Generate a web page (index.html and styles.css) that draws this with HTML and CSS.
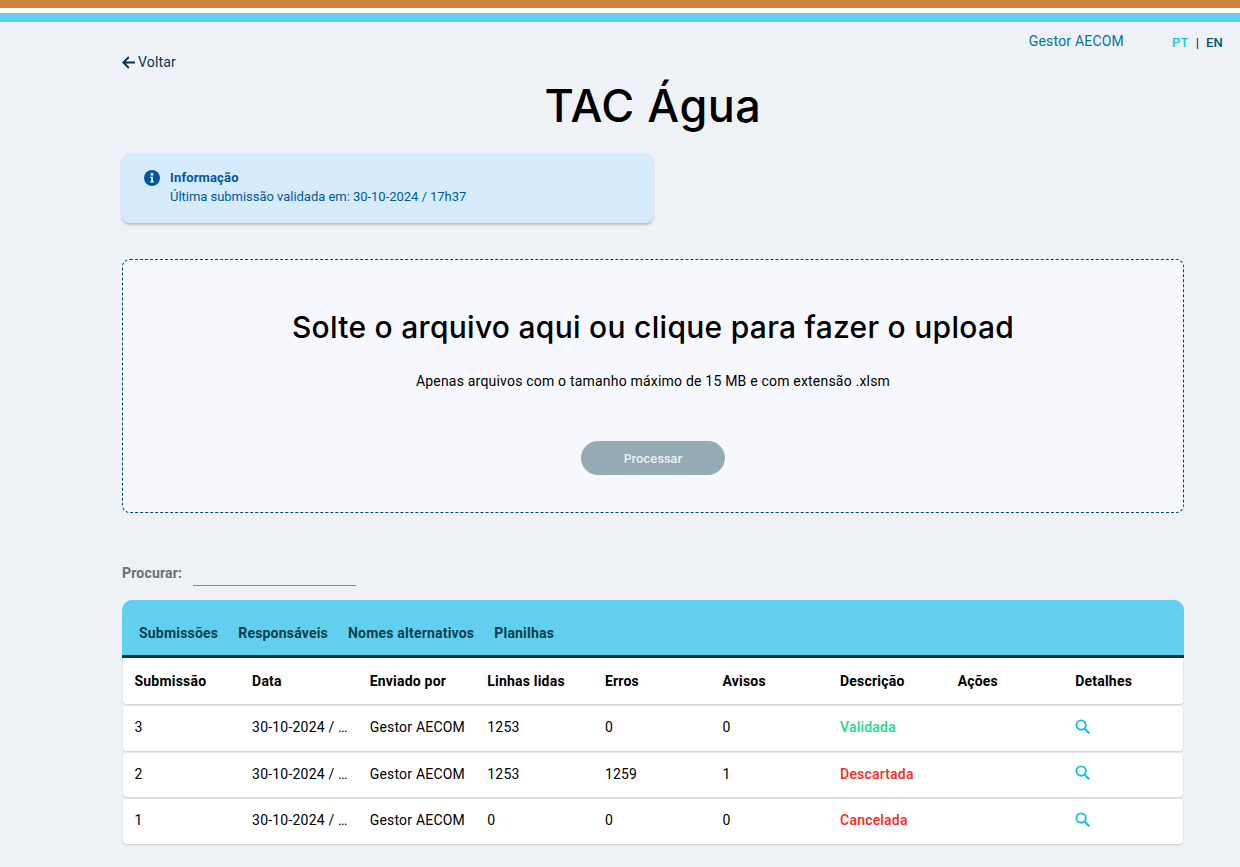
FILE: index.html
```html
<!DOCTYPE html>
<html lang="pt">
<head>
<meta charset="utf-8">
<title>TAC Água</title>
<link rel="stylesheet" href="styles.css">
</head>
<body>
<div class="bar-orange"></div>
<div class="bar-blue"></div>
<main class="page">
  <div class="userbar">
    <span class="user">Gestor AECOM</span>
    <span class="langs"><span class="lang-on">PT</span><span class="lang-sep">|</span><span class="lang-off">EN</span></span>
  </div>
  <a class="back" href="#">
    <svg class="back-icon" viewBox="2 2 20 20" width="13" height="13" aria-hidden="true"><path d="M22 12H5M12.500 3.500 4 12l8.500 8.500" fill="none" stroke="currentColor" stroke-width="2.900"/></svg>
    Voltar
  </a>
  <h1 class="title">TAC Água</h1>
  <section class="notice">
    <svg class="notice-icon" viewBox="0 0 16 16" width="16" height="16" aria-hidden="true"><circle cx="8" cy="8" r="8" fill="#01579b"/><circle cx="8" cy="4.400" r="1.400" fill="#fff"/><path d="M6.200 6.800H9v4.600h1v1.200H6.200v-1.200h1V8h-1z" fill="#fff"/></svg>
    <div>
      <div class="notice-title">Informação</div>
      <div class="notice-text">Última submissão validada em: 30-10-2024 / 17h37</div>
    </div>
  </section>
  <section class="drop">
    <h2 class="drop-title">Solte o arquivo aqui ou clique para fazer o upload</h2>
    <p class="drop-text">Apenas arquivos com o tamanho máximo de 15 MB e com extensão .xlsm</p>
    <button class="process" type="button">Processar</button>
  </section>
  <div class="search">
    <label class="search-label" for="q">Procurar:</label>
    <input class="search-input" id="q" type="text">
  </div>
  <section class="panel">
    <nav class="tabs">
      <span class="tab">Submissões</span>
      <span class="tab">Responsáveis</span>
      <span class="tab">Nomes alternativos</span>
      <span class="tab">Planilhas</span>
    </nav>
    <div class="rows">
      <div class="row head">
        <span>Submissão</span><span>Data</span><span>Enviado por</span><span>Linhas lidas</span><span>Erros</span><span>Avisos</span><span>Descrição</span><span>Ações</span><span>Detalhes</span>
      </div>
      <div class="row">
        <span>3</span><span class="clip">30-10-2024 / 17h37</span><span>Gestor AECOM</span><span>1253</span><span>0</span><span>0</span><span class="ok">Validada</span><span></span>
        <span><svg class="lens" viewBox="0 0 16 16" width="15" height="15" aria-hidden="true"><circle cx="6.500" cy="6.500" r="5" fill="none" stroke="currentColor" stroke-width="2"/><path d="m10.300 10.300 4.400 4.400" stroke="currentColor" stroke-width="2.200" stroke-linecap="round"/></svg></span>
      </div>
      <div class="row">
        <span>2</span><span class="clip">30-10-2024 / 16h12</span><span>Gestor AECOM</span><span>1253</span><span>1259</span><span>1</span><span class="bad">Descartada</span><span></span>
        <span><svg class="lens" viewBox="0 0 16 16" width="15" height="15" aria-hidden="true"><circle cx="6.500" cy="6.500" r="5" fill="none" stroke="currentColor" stroke-width="2"/><path d="m10.300 10.300 4.400 4.400" stroke="currentColor" stroke-width="2.200" stroke-linecap="round"/></svg></span>
      </div>
      <div class="row">
        <span>1</span><span class="clip">30-10-2024 / 15h48</span><span>Gestor AECOM</span><span>0</span><span>0</span><span>0</span><span class="bad">Cancelada</span><span></span>
        <span><svg class="lens" viewBox="0 0 16 16" width="15" height="15" aria-hidden="true"><circle cx="6.500" cy="6.500" r="5" fill="none" stroke="currentColor" stroke-width="2"/><path d="m10.300 10.300 4.400 4.400" stroke="currentColor" stroke-width="2.200" stroke-linecap="round"/></svg></span>
      </div>
    </div>
  </section>
</main>
</body>
</html>
```
FILE: styles.css
```css
* { box-sizing: border-box; }
html, body { margin: 0; height: 100%; }
body {
  background: #eef1f6;
  font-family: Roboto, "Liberation Sans", sans-serif;
  font-size: 14px;
  letter-spacing: .2px;
  color: #000;
  overflow: hidden;
}
.bar-orange { height: 8px; background: #c98345; box-shadow: 0 5px 0 #fff; }
.bar-blue { height: 9px; margin-top: 5px; background: #63cfee; }
.page { width: 1062px; margin-left: 122px; }

.userbar { display: flex; justify-content: flex-end; align-items: center; height: 18px; margin-top: 10px; margin-right: -39px; }
.user { color: #00789c; font-size: 14px; }
.langs { display: flex; align-items: center; margin-left: 48px; width: 51px; font-size: 13px; font-weight: 500; position: relative; top: 1px; }
.lang-on { color: #13c4e3; }
.lang-sep { color: #003d52; margin: 0 7px; }
.lang-off { color: #005a73; }

.back { display: flex; align-items: center; gap: 3px; height: 18px; margin-top: 3px; color: #05364a; text-decoration: none; font-size: 14px; letter-spacing: .15px; }
.back-icon { flex: none; }

.title { margin: 5px 0 0; height: 60px; line-height: 60px; text-align: center; font-family: Inter, sans-serif; font-size: 45px; font-weight: 500; letter-spacing: .5px; color: #000; }

.notice { display: flex; align-items: flex-start; gap: 10px; width: 531px; height: 70px; margin-top: 17px; padding: 17px 22px; background: #d6ecfd; border-radius: 8px; box-shadow: 0 2px 3px rgba(0,0,0,.22); color: #01579b; font-size: 13px; letter-spacing: -.03px; }
.notice-icon { flex: none; }
.notice-title { font-weight: 700; line-height: 16px; letter-spacing: .15px; }
.notice-text { line-height: 20px; margin-top: 1px; }

.drop { height: 254px; margin-top: 36px; border: 1px dashed #00465e; border-radius: 8px; background: #f6f8fd; display: flex; flex-direction: column; align-items: center; }
.drop-title { margin: 48px 0 0; height: 38px; line-height: 38px; font-family: Inter, sans-serif; font-size: 30px; font-weight: 500; letter-spacing: .28px; color: #000; }
.drop-text { margin: 26px 0 0; line-height: 18px; font-size: 14px; }
.process { width: 144px; height: 34px; margin-top: 51px; border: 0; border-radius: 17px; background: #95abb4; color: #e9eef1; font-family: Inter, sans-serif; font-size: 12px; font-weight: 600; letter-spacing: 0; }

.search { display: flex; align-items: flex-start; height: 25px; margin-top: 48px; }
.search-label { color: #6e6e6e; font-weight: 700; font-size: 14px; line-height: 24px; width: 71px; }
.search-input { width: 163px; height: 25px; border: 0; border-bottom: 1px solid #3ba6c4; background: transparent; outline: none; }

.panel { margin-top: 14px; }
.tabs { display: flex; align-items: flex-end; gap: 20px; height: 58px; padding: 0 17px 13px; background: #63cfee; border-bottom: 3px solid #05364a; border-radius: 10px 10px 0 0; }
.tab { color: #05404f; font-weight: 700; font-size: 14px; line-height: 18px; }

.rows { display: flex; flex-direction: column; gap: 2px; padding: 0 1px; }
.row { display: grid; grid-template-columns: repeat(9, 117.6px); align-items: center; height: 44.6px; padding: 0 0 2px 11.5px; background: #fff; border-radius: 4px; box-shadow: 0 1px 2px rgba(0,0,0,.16); }
.row.head { height: 46px; padding-bottom: 0; font-weight: 700; border-radius: 0 0 4px 4px; }
.clip { overflow: hidden; white-space: nowrap; text-overflow: ellipsis; padding-right: 20px; }
.ok { color: #22d88a; font-weight: 500; }
.bad { color: #f32a1e; font-weight: 500; }
.lens { color: #13c0dc; display: block; transform: translateY(-1px); }
```
